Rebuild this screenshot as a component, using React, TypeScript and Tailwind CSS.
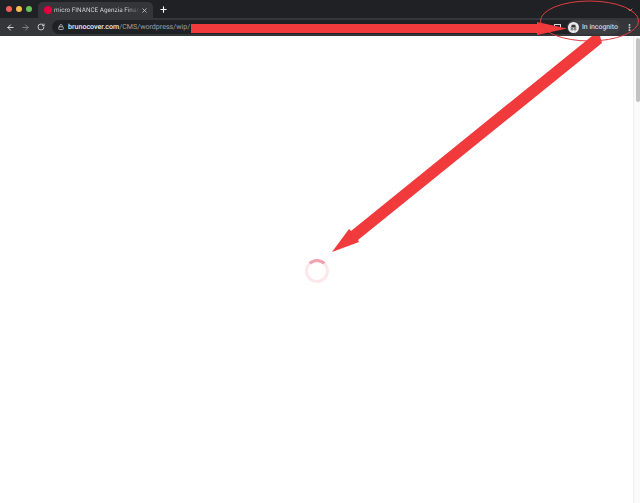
import React from "react";
import { ArrowLeft, ArrowRight, RotateCw, Lock, Plus, X, ChevronDown, EllipsisVertical } from "lucide-react";

const App: React.FC = () => {
  return (
    <div className="relative w-[640px] h-[503px] overflow-hidden bg-white flex flex-col font-['Roboto',Arial,sans-serif] [text-rendering:geometricPrecision]">
      {/* Tab strip */}
      <div className="h-[18px] shrink-0 bg-[#202124] flex items-end pl-[6px] pr-[6px]">
        <div className="flex items-center gap-[4px] h-[18px] pb-[1px]">
          <span className="w-[6px] h-[6px] rounded-full bg-[#ed5f57]" />
          <span className="w-[6px] h-[6px] rounded-full bg-[#f5bd4f]" />
          <span className="w-[6px] h-[6px] rounded-full bg-[#62c454]" />
        </div>
        <div className="ml-[6px] w-[115px] h-[16px] bg-[#35363a] rounded-t-[5px] flex items-center pl-[6px] pr-[5px]">
          <span className="w-[8px] h-[8px] rounded-full bg-[#e4003f] shrink-0" />
          <span className="ml-[2px] whitespace-nowrap text-[6.4px] leading-[9px] text-transparent bg-clip-text bg-linear-to-r from-[#dcdde0] from-85% to-[#35363a]">
            micro FINANCE Agenzia Finan
          </span>
          <X className="ml-auto w-[7px] h-[7px] text-[#dadce0]" strokeWidth={2.5} />
        </div>
        <Plus className="ml-[6px] mb-[4px] w-[9px] h-[9px] text-white" strokeWidth={3} />
        <ChevronDown className="ml-auto mb-[4px] w-[8px] h-[8px] text-[#c4c6c9]" strokeWidth={2} />
      </div>

      {/* Toolbar */}
      <div className="h-[18px] shrink-0 bg-[#35363a] flex items-center pl-[6px] pr-[6px]">
        <ArrowLeft className="w-[9px] h-[9px] text-[#dadce0]" strokeWidth={2.5} />
        <ArrowRight className="ml-[6px] w-[9px] h-[9px] text-[#85878a]" strokeWidth={2.5} />
        <RotateCw className="ml-[7px] w-[8px] h-[8px] text-[#dadce0]" strokeWidth={2.5} />
        <div className="ml-[7px] flex-1 h-[14px] bg-[#202124] rounded-full flex items-center pl-[6px]">
          <Lock className="w-[6px] h-[6px] text-[#c0c2c5]" strokeWidth={3} />
          <span className="ml-[4px] text-[7.1px] leading-none whitespace-nowrap">
            <span className="text-[#e8eaed] font-medium">brunocover.com</span>
            <span className="text-[#9aa0a6]">/CMS/wordpress/wip/</span>
          </span>
          <div className="ml-auto flex items-center h-full">
            <span className="w-[7px] h-[6px] border border-[#d5d7da] bg-[#202124] mr-[6px]" />
            <div className="h-full w-[54px] pl-[1px] rounded-full bg-[#3c3d41] flex items-center">
              <span className="w-[11px] h-[11px] rounded-full bg-[#e8eaed] flex items-center justify-center shrink-0">
                <svg viewBox="0 0 12 12" className="w-[9px] h-[9px]">
                  <path d="M2 5.5h8v.8H2zM3.6 2.2h4.8l.7 3H2.9z" fill="#35363a" />
                  <circle cx="4" cy="8.3" r="1.3" fill="none" stroke="#35363a" strokeWidth="0.9" />
                  <circle cx="8" cy="8.3" r="1.3" fill="none" stroke="#35363a" strokeWidth="0.9" />
                </svg>
              </span>
              <span className="ml-[3px] text-[6.9px] leading-none whitespace-nowrap text-[#e8eaed]">In incognito</span>
            </div>
          </div>
        </div>
        <EllipsisVertical className="ml-[4px] w-[9px] h-[9px] text-[#dadce0]" strokeWidth={3} />
      </div>

      {/* Page */}
      <div className="flex-1 flex min-h-0">
        <main className="flex-1 flex items-center justify-center">
          <div className="mt-[3px] w-[24px] h-[24px] rounded-full border-[3px] border-[#fce8ec] border-t-[#f29fb0]" />
        </main>
        <div className="w-[7px] shrink-0 bg-[#fafafa] border-l border-[#efefef] pt-[2px] pl-[2px]">
          <div className="w-[4px] h-[64px] rounded-full bg-[#c2c2c2]" />
        </div>
      </div>

      {/* Red annotations drawn over the screenshot */}
      <svg className="absolute inset-0 pointer-events-none" width="640" height="503" viewBox="0 0 640 503">
        <polygon points="191,24 537,24 537,22 567,28.5 537,35 537,33 191,33" fill="#f13a3c" />
        <ellipse cx="589.5" cy="21" rx="49" ry="20" fill="none" stroke="#e23b3f" strokeWidth="1" />
        <polygon points="592,36 600,36 602,43 358,240 359,242 332,252 349,229 351,231" fill="#f13a3c" />
      </svg>
    </div>
  );
};

export default App;
